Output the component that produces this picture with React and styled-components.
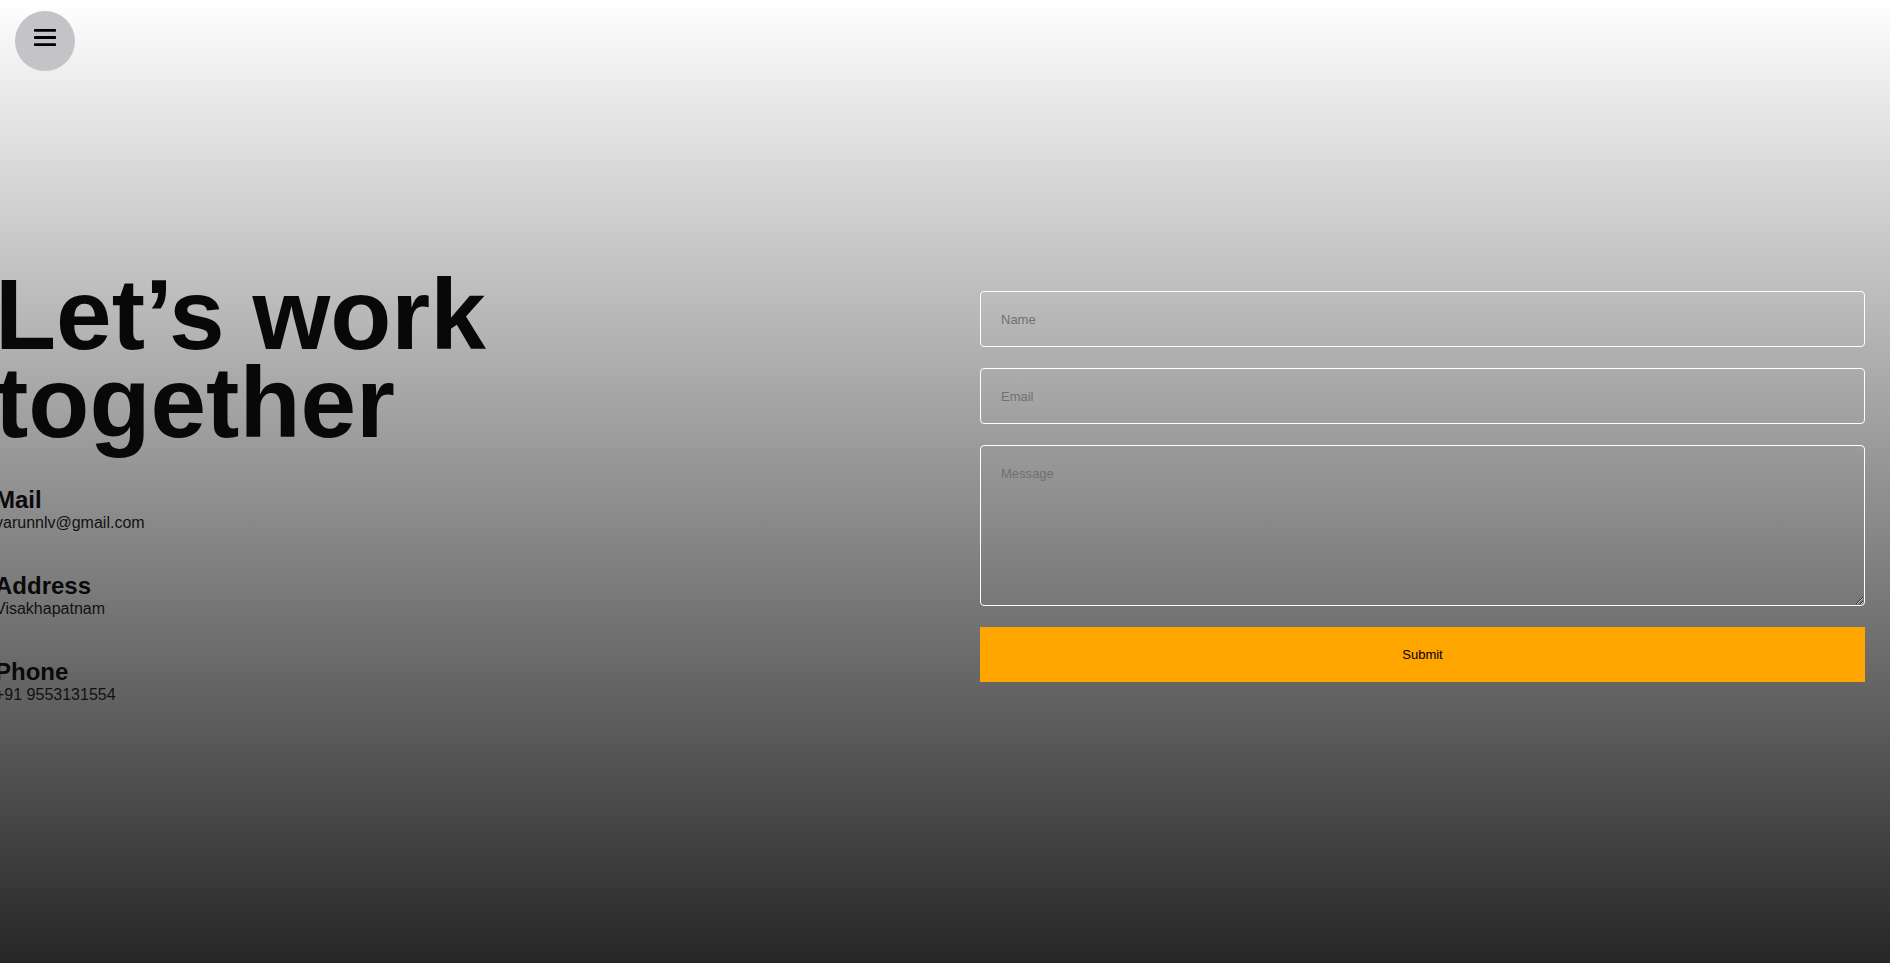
import styled, { createGlobalStyle } from "styled-components";

const GlobalStyle = createGlobalStyle`
  * { box-sizing: border-box; }
  body {
    margin: 0;
    font-family: "Liberation Sans", Arial, sans-serif;
    color: #0a0a0a;
  }
`;

export default function App() {
  return (
    <>
      <GlobalStyle />
      <Page>
        <MenuButton aria-label="menu">
          <svg width="22" height="17" viewBox="0 0 22 17">
            <rect x="0" y="0" width="22" height="2.8" rx="0.7" fill="#000" />
            <rect x="0" y="7.1" width="22" height="2.8" rx="0.7" fill="#000" />
            <rect x="0" y="14.2" width="22" height="2.8" rx="0.7" fill="#000" />
          </svg>
        </MenuButton>

        <Contact>
          <Info>
            <Titulo>Let’s work<br />together</Titulo>
            <Detalhe>
              <h3>Mail</h3>
              <p>varunnlv@gmail.com</p>
            </Detalhe>
            <Detalhe>
              <h3>Address</h3>
              <p>Visakhapatnam</p>
            </Detalhe>
            <Detalhe>
              <h3>Phone</h3>
              <p>+91 9553131554</p>
            </Detalhe>
          </Info>

          <Formulario onSubmit={(e) => e.preventDefault()}>
            <Campo type="text" placeholder="Name" />
            <Campo type="email" placeholder="Email" />
            <Mensagem placeholder="Message" />
            <Enviar type="submit">Submit</Enviar>
          </Formulario>
        </Contact>
      </Page>
    </>
  );
}

const Page = styled.div`
  min-height: 100vh;
  background: linear-gradient(#ffffff, #262626);
`;

const MenuButton = styled.button`
  position: fixed;
  top: 11px;
  left: 15px;
  width: 60px;
  height: 60px;
  border: none;
  border-radius: 50%;
  background-color: #c4c3c8;
  display: flex;
  align-items: center;
  justify-content: center;
  padding: 0 0 8px 0;
  cursor: pointer;
`;

const Contact = styled.section`
  height: 100vh;
  padding-top: 10px;
  display: flex;
  align-items: center;
  justify-content: space-between;
`;

const Info = styled.div`
  margin-left: -5px;
  display: flex;
  flex-direction: column;
  gap: 40px;
`;

const Titulo = styled.h1`
  margin: 0;
  font-size: 100px;
  line-height: 88px;
  font-weight: 700;
  color: #080808;
`;

const Detalhe = styled.div`
  display: flex;
  flex-direction: column;

  h3 {
    margin: 0;
    font-size: 24px;
    font-weight: 700;
    color: #0a0a0a;
  }

  p {
    margin: 0;
    font-size: 16px;
    color: #111;
  }
`;

const Formulario = styled.form`
  width: 885px;
  margin-right: 25px;
  display: flex;
  flex-direction: column;
  gap: 21px;
`;

const Campo = styled.input`
  height: 56px;
  padding: 0 20px;
  border: 1px solid #ffffff;
  border-radius: 4px;
  background: transparent;
  font-family: "Liberation Sans", Arial, sans-serif;
  font-size: 13px;
  color: #111;
  outline: none;

  &::placeholder {
    color: #707070;
  }
`;

const Mensagem = styled.textarea`
  height: 161px;
  padding: 20px;
  border: 1px solid #ffffff;
  border-radius: 4px;
  background: transparent;
  font-family: "Liberation Sans", Arial, sans-serif;
  font-size: 13px;
  color: #111;
  outline: none;

  &::placeholder {
    color: #707070;
  }
`;

const Enviar = styled.button`
  height: 55px;
  border: none;
  background-color: #ffa500;
  font-family: "Liberation Sans", Arial, sans-serif;
  font-size: 13px;
  color: #000;
  cursor: pointer;
`;
